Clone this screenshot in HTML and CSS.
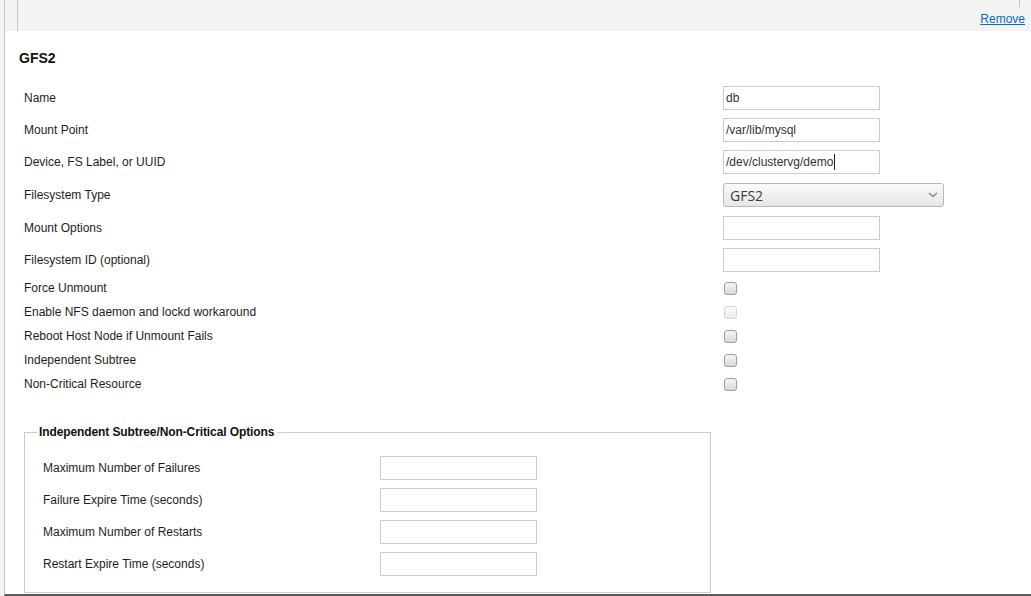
FILE: index.html
```html
<!DOCTYPE html>
<html>
<head>
<meta charset="utf-8">
<link rel="stylesheet" href="styles.css">
</head>
<body>
<div class="page">
  <div class="topbar">
    <div class="topbox">
      <div class="topbox-end"></div>
      <a class="remove" href="#">Remove</a>
    </div>
  </div>
  <div class="content">
    <h3 class="title">GFS2</h3>
    <div class="form">
      <div class="row"><span class="label">Name</span><input class="text" type="text" value="db"></div>
      <div class="row"><span class="label">Mount Point</span><input class="text" type="text" value="/var/lib/mysql"></div>
      <div class="row"><span class="label">Device, FS Label, or UUID</span><span class="focused"><input class="text" type="text" value="/dev/clustervg/demo"><span class="caret"></span></span></div>
      <div class="row row-select"><span class="label">Filesystem Type</span>
        <span class="select-wrap">
          <select class="select"><option>GFS2</option></select>
          <svg class="chev" width="10" height="6" viewBox="0 0 10 6"><path d="M1 1 L5 4.5 L9 1" fill="none" stroke="#8a8a8a" stroke-width="1.5"/></svg>
        </span>
      </div>
      <div class="row"><span class="label">Mount Options</span><input class="text" type="text"></div>
      <div class="row"><span class="label">Filesystem ID (optional)</span><input class="text" type="text"></div>
      <div class="row row-check"><span class="label">Force Unmount</span><input class="check" type="checkbox"></div>
      <div class="row row-check"><span class="label">Enable NFS daemon and lockd workaround</span><input class="check" type="checkbox" disabled></div>
      <div class="row row-check"><span class="label">Reboot Host Node if Unmount Fails</span><input class="check" type="checkbox"></div>
      <div class="row row-check"><span class="label">Independent Subtree</span><input class="check" type="checkbox"></div>
      <div class="row row-check"><span class="label">Non-Critical Resource</span><input class="check" type="checkbox"></div>
    </div>
    <fieldset class="options">
      <legend class="legend">Independent Subtree/Non-Critical Options</legend>
      <div class="row sub"><span class="label">Maximum Number of Failures</span><input class="text" type="text"></div>
      <div class="row sub"><span class="label">Failure Expire Time (seconds)</span><input class="text" type="text"></div>
      <div class="row sub"><span class="label">Maximum Number of Restarts</span><input class="text" type="text"></div>
      <div class="row sub"><span class="label">Restart Expire Time (seconds)</span><input class="text" type="text"></div>
    </fieldset>
  </div>
</div>
</body>
</html>
```
FILE: styles.css
```css
html, body {
  margin: 0;
  padding: 0;
  height: 596px;
  overflow: hidden;
  background: #f3f3f3;
}
body {
  font-family: "Liberation Sans", Arial, sans-serif;
  font-size: 12px;
  color: #1e1e1e;
}
.page {
  margin-left: 4px;
  border-left: 1px solid #c6c6c6;
  background: #fff;
  height: 594px;
  border-bottom: 2px solid #5c5c5c;
  overflow: hidden;
}
.topbar {
  height: 31px;
  background: #f3f3f3;
  padding-left: 12px;
  display: flex;
}
.topbox {
  flex: 1;
  border-left: 1px solid #c6c6c6;
  display: flex;
  flex-direction: column;
  align-items: flex-end;
}
.topbox-end {
  height: 7px;
  width: 1px;
  background: #c6c6c6;
  margin-right: 11px;
}
.remove {
  color: #0b6bbf;
  text-decoration: underline;
  font-size: 12px;
  line-height: 14px;
  margin-top: 5px;
  margin-right: 6px;
}
.content {
  padding-left: 14px;
}
.title {
  margin: 19px 0 16px 0;
  font-size: 14px;
  line-height: 16px;
  font-weight: bold;
  color: #111;
}
.form {
  padding-left: 5px;
}
.row {
  display: grid;
  grid-template-columns: 699px auto;
  align-items: center;
  height: 32px;
}
.row-select {
  height: 34px;
}
.row-check {
  height: 24px;
}
.label {
  line-height: 14px;
}
.text {
  box-sizing: border-box;
  width: 157px;
  height: 24px;
  margin: 0;
  border: 1px solid #c9cdd1;
  border-radius: 0;
  padding: 0 2px;
  font-family: "Liberation Sans", Arial, sans-serif;
  font-size: 12px;
  color: #333;
  background: #fff;
  outline: none;
}
.focused {
  position: relative;
  display: inline-block;
  width: 157px;
  height: 24px;
}
.caret {
  position: absolute;
  left: 111px;
  top: 4px;
  width: 1px;
  height: 16px;
  background: #222;
}
.select-wrap {
  position: relative;
  display: inline-block;
  width: 221px;
  height: 24px;
}
.select {
  -webkit-appearance: none;
  appearance: none;
  box-sizing: border-box;
  width: 221px;
  height: 24px;
  margin: 0;
  border: 1px solid #b9b9b9;
  border-radius: 3px;
  padding: 0 0 0 6px;
  background: linear-gradient(#fbfbfb, #e6e6e6);
  font-family: "Open Sans", "DejaVu Sans", sans-serif;
  font-size: 14px;
  color: #3a3a3a;
  outline: none;
}
.chev {
  position: absolute;
  right: 6px;
  top: 9px;
}
.check {
  -webkit-appearance: none;
  appearance: none;
  box-sizing: border-box;
  width: 13px;
  height: 13px;
  margin: 0 0 0 1px;
  border: 1px solid #9f9f9f;
  border-radius: 3px;
  background: linear-gradient(#f6f6f6, #d9d9d9);
}
.check:disabled {
  border-color: #d4d4d4;
  background: linear-gradient(#fafafa, #ececec);
}
.options {
  margin: 28px 0 0 5px;
  width: 667px;
  box-sizing: content-box;
  border: 1px solid #c9cdd1;
  padding: 12px 0 12px 18px;
}
.legend {
  margin-left: -6px;
  padding: 0 3px 0 2px;
  font-weight: bold;
  font-size: 12px;
  line-height: 16px;
  letter-spacing: -0.1px;
  color: #111;
}
.row.sub {
  grid-template-columns: 337px auto;
}
```
